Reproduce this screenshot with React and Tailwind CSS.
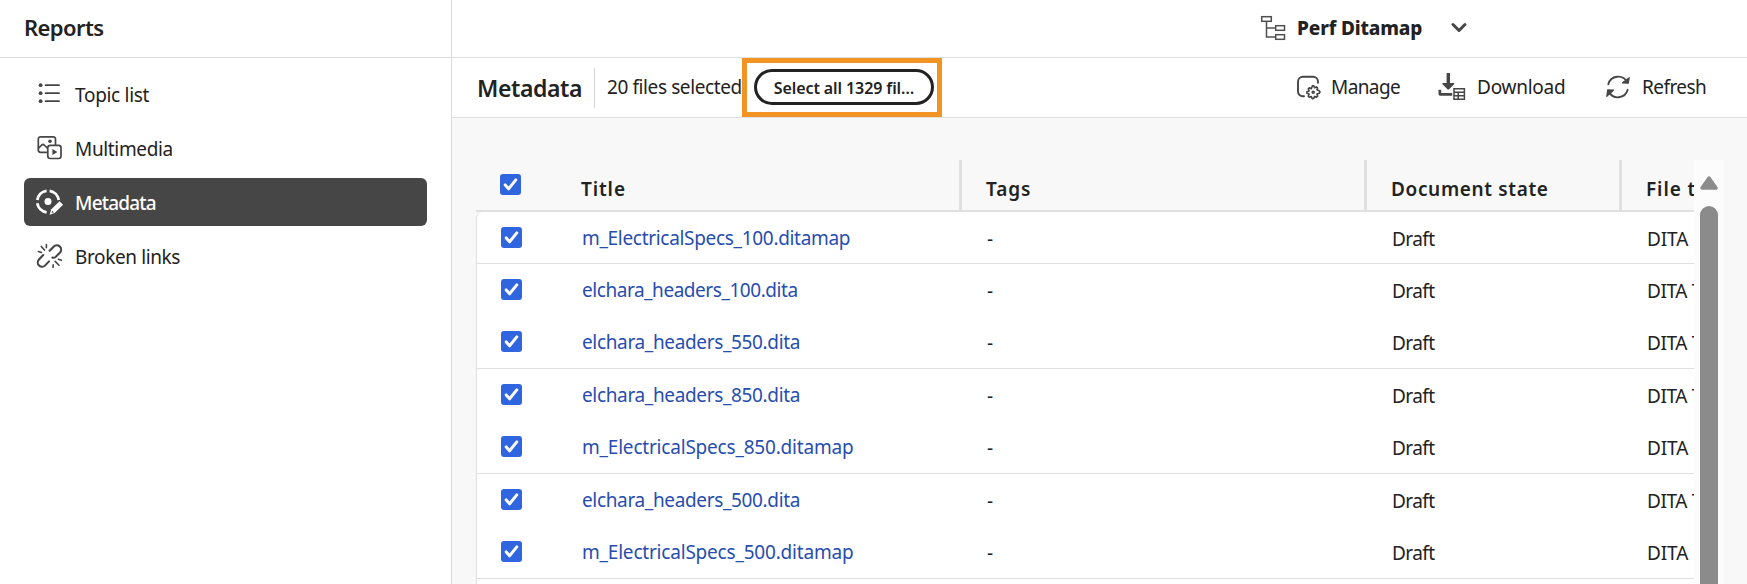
import React from "react";

const rows = [
  ["m_ElectricalSpecs_100.ditamap", "DITA Map"],
  ["elchara_headers_100.dita", "DITA Topic"],
  ["elchara_headers_550.dita", "DITA Topic"],
  ["elchara_headers_850.dita", "DITA Topic"],
  ["m_ElectricalSpecs_850.ditamap", "DITA Map"],
  ["elchara_headers_500.dita", "DITA Topic"],
  ["m_ElectricalSpecs_500.ditamap", "DITA Map"],
];

const ListIcon = () => (
  <svg width="28" height="28" viewBox="0 0 28 28" className="shrink-0" fill="none" stroke="#464646" strokeWidth="1.8" strokeLinecap="round">
    <path d="M10.6 5.2H24M10.6 13.2H24M10.6 21.2H24" />
    <g fill="#464646" stroke="none">
      <circle cx="5.6" cy="5.2" r="1.9" />
      <circle cx="5.6" cy="13.2" r="1.9" />
      <circle cx="5.6" cy="21.2" r="1.9" />
    </g>
  </svg>
);

const MediaIcon = () => (
  <svg width="28" height="28" viewBox="0 0 28 28" className="shrink-0" fill="none" stroke="#464646" strokeWidth="1.7" strokeLinecap="round" strokeLinejoin="round">
    <path d="M11.5 18.3H5.6a2.3 2.3 0 0 1-2.3-2.3V5.1a2.3 2.3 0 0 1 2.3-2.3h12.6a2.3 2.3 0 0 1 2.3 2.3v5.3" />
    <path d="M3.6 14.2 6.7 11q1.2-1.1 2.4 0l3 2.9" />
    <circle cx="15" cy="7.3" r="1.8" fill="#464646" stroke="none" />
    <rect x="12.8" y="11.3" width="13.2" height="13.2" rx="2.4" />
    <path d="M17.4 15v6l5-3z" fill="#464646" stroke="none" />
  </svg>
);

const MetadataIcon = () => (
  <svg width="28" height="28" viewBox="0 0 28 28" className="shrink-0 overflow-visible">
    <circle cx="13" cy="13.4" r="3.5" fill="#fff" />
    <g fill="none" stroke="#fff" strokeWidth="2.8">
      <path d="M2.3 12A10.9 10.9 0 0 1 11.6 2.8" />
      <path d="M14.6 2.8A10.9 10.9 0 0 1 23.8 12" />
      <path d="M2.3 15.2A10.9 10.9 0 0 0 11.6 24.3" />
    </g>
    <path d="m14.6 26.8 1.7-5.6 8.2-8 3.6 3.6-8.5 8.1z" fill="#fff" />
    <path d="m16.5 25 .7-2.3 1.7 1.6z" fill="#464646" />
  </svg>
);

const BrokenIcon = () => (
  <svg width="28" height="28" viewBox="0 0 28 28" className="shrink-0" fill="none" stroke="#464646" strokeWidth="2.1" strokeLinecap="round">
    <path d="m14.6 8.7 4-4a4.3 4.3 0 0 1 6.4 5.8l-4.4 4.5q-1.6 1.3-3.2.5" />
    <path d="M14 19.4l-3.8 4a4.3 4.3 0 0 1-6.2-6l4.2-4.4" />
    <g strokeWidth="1.6">
      <path d="M11.4 2.5v3.2M6.3 4.4l3.2 3.7M3.4 9.5l3 .9" />
      <path d="m23.4 17.3 3 .9M20.2 19.4l3.8 3.9M18.2 22.8l-.2 2.6" />
    </g>
  </svg>
);

const MapIcon = () => (
  <svg width="26" height="26" viewBox="0 0 26 26" className="shrink-0" fill="none" stroke="#505050" strokeWidth="1.5">
    <rect x="1.7" y="1.7" width="9.6" height="4.6" />
    <rect x="15.7" y="10.7" width="8.8" height="4.6" />
    <rect x="15.7" y="19.7" width="8.8" height="4.6" />
    <path d="M6.5 6.3v15.7h9.2M6.5 13h9.2" />
  </svg>
);

const ManageIcon = () => (
  <svg width="26" height="26" viewBox="0 0 26 26" className="shrink-0" fill="none" stroke="#464646" strokeWidth="1.9" strokeLinecap="round" strokeLinejoin="round">
    <path d="M8 22.2H6.7a4.7 4.7 0 0 1-4.7-4.7V7.7A4.9 4.9 0 0 1 6.9 2.8h10.2a4.9 4.9 0 0 1 4.9 4.9v1" />
    <g strokeWidth="1.6">
      <path d="m15.8 11.9 1.4-.1.8 2 1.8-.9 1.2 1-.7 1.9 2.3.9.8 1.3-.8 1.2-2.3.8.8 2-1.1 1.2-2-.8-.9 2.1-1.5.1-.9-2.1-2 .8-1-1.1.8-2.1-2.1-.9-.1-1.4 2.2-.9-.8-2 1-1.1 2 .9z" transform="translate(.6 0)" />
      <circle cx="17.2" cy="18.3" r="1" />
    </g>
  </svg>
);

const DownloadIcon = () => (
  <svg width="28" height="28" viewBox="0 0 28 28" className="shrink-0" fill="#464646">
    <path d="M8.6 0h3.4v10h4.1v1.2l-5.2 5.4h-1.2l-5.2-5.4V10h4.1z" />
    <path d="M.5 16.8h2.7v3.2h11v2.8H2.2Q.5 22.8.5 21z" />
    <path d="M16 15.8h10.4v10.4H16zM16 19.3h10.4M16 22.7h10.4M20.2 19.3v7" fill="none" stroke="#464646" strokeWidth="1.5" />
  </svg>
);

const RefreshIcon = () => (
  <svg width="26" height="26" viewBox="0 0 26 26" className="shrink-0" fill="none" stroke="#464646" strokeWidth="1.9" strokeLinecap="round">
    <path d="M3.3 10.2A10.2 10.2 0 0 1 22.2 8.2" />
    <path d="M22.7 15.8A10.2 10.2 0 0 1 3.8 17.8" />
    <path d="M24.2 3.7 23.3 9.2 17.5 8.8z" fill="#464646" strokeWidth="1.2" strokeLinejoin="round" />
    <path d="M1.8 22.3 2.7 15.8 8.5 16.2z" fill="#464646" strokeWidth="1.2" strokeLinejoin="round" />
  </svg>
);

function Check() {
  return (
    <span className="block size-[21px] shrink-0 rounded-[3px] bg-[#2f65de]">
      <svg width="21" height="21" viewBox="0 0 21 21" fill="none" stroke="#fafafa" strokeWidth="3" strokeLinecap="round" strokeLinejoin="round">
        <path d="m5.2 10.9 3.4 3.9 7.2-8.9" />
      </svg>
    </span>
  );
}

function NavItem({ icon, label, active, spacing }) {
  return (
    <li className={"flex h-12 items-center gap-3 rounded-md pl-[11px] " + (active ? "bg-[#464646] font-medium text-white" : "text-[#222]")}>
      {icon}
      <span className={"pt-0.5 " + spacing}>{label}</span>
    </li>
  );
}

export default function App() {
  return (
    <div className="flex h-[584px] w-[1747px] overflow-hidden bg-white font-['Noto_Sans','Liberation_Sans',sans-serif] text-[19px] leading-6 text-[#222]">
      <aside className="w-[452px] shrink-0 border-r border-[#dadada]">
        <header className="flex h-[58px] items-center border-b border-[#dadada] pb-[3px] pl-6">
          <h1 className="text-[22px] font-semibold tracking-[-0.6px]">Reports</h1>
        </header>
        <ul className="flex w-[427px] flex-col gap-1.5 pt-3 pl-6">
          <NavItem icon={<ListIcon />} label="Topic list" spacing="tracking-[-0.3px]" />
          <NavItem icon={<MediaIcon />} label="Multimedia" spacing="tracking-[-0.35px]" />
          <NavItem icon={<MetadataIcon />} label="Metadata" spacing="tracking-[-0.8px]" active />
          <NavItem icon={<BrokenIcon />} label="Broken links" spacing="tracking-[-0.38px]" />
        </ul>
      </aside>

      <main className="flex min-w-0 flex-1 flex-col">
        <div className="flex h-[58px] shrink-0 items-center border-b border-[#dfdfdf] pb-[2px] pl-[808px]">
          <MapIcon />
          <span className="ml-[11px] w-[153px] pt-px font-extrabold tracking-[-0.15px]">Perf Ditamap</span>
          <svg width="18" height="12" viewBox="0 0 18 12" fill="none" stroke="#464646" strokeWidth="3" strokeLinecap="round" strokeLinejoin="round">
            <path d="m3 2.5 6 6 6-6" />
          </svg>
        </div>

        <div className="flex h-[60px] shrink-0 items-center border-b border-[#dfdfdf]">
          <h2 className="ml-[25px] w-[117px] text-[23px] font-semibold tracking-[-0.4px]">Metadata</h2>
          <div className="h-10 w-px bg-[#d5d5d5]" />
          <span className="ml-3 w-[135px] pb-px tracking-[-0.4px] whitespace-nowrap">20 files selected</span>
          <div className="flex h-[59px] w-[200px] items-center border-[5px] border-[#f29423] pb-px pl-[7px]">
            <button className="h-9 w-[180px] rounded-full border-[3px] border-[#222] text-[16px] leading-[30px] font-semibold tracking-[-0.1px] whitespace-nowrap">
              <span className="block pt-px">Select all 1329 fil…</span>
            </button>
          </div>
          <div className="ml-auto flex items-center pr-[39px] pb-[2px]">
            <div className="flex items-center">
              <ManageIcon />
              <span className="ml-[9px] w-[107px] tracking-[-0.6px]">Manage</span>
            </div>
            <div className="flex items-center">
              <DownloadIcon />
              <span className="ml-[11px] w-[128px] tracking-[-0.24px]">Download</span>
            </div>
            <div className="flex items-center">
              <RefreshIcon />
              <span className="ml-[11px] w-[66px] tracking-[-0.55px]">Refresh</span>
            </div>
          </div>
        </div>

        <div className="flex min-h-0 flex-1 bg-[#f8f8f8] pt-[42px] pl-6">
          <div className="w-[1218px] shrink-0 overflow-hidden">
            <div className="flex h-[52px] w-[1400px] border-b-2 border-[#e0e0e0] font-semibold tracking-[0.9px]">
              <div className="flex w-[105px] items-center pb-px pl-6"><Check /></div>
              <div className="flex w-[381px] items-center border-r-[3px] border-[#e0e0e0] pt-2">Title</div>
              <div className="flex w-[405px] items-center border-r-[3px] border-[#e0e0e0] pt-2 pl-6">Tags</div>
              <div className="flex w-[255px] items-center border-r-[3px] border-[#e0e0e0] pt-2 pl-6 tracking-[0.65px]">Document state</div>
              <div className="flex flex-1 items-center pt-2 pl-6">File type</div>
            </div>
            <div className="w-[1400px] rounded-tl-md border-l border-[#e0e0e0] bg-white">
              {rows.map(([name, type], i) => (
                <div key={name} className={"flex pt-[15px] " + (i % 2 === 0 ? "border-b border-[#e0e0e0] " : "") + (i === 0 || i % 2 === 1 ? "h-[52px]" : "h-[53px]")}>
                  <div className="w-[105px] pl-6"><Check /></div>
                  <a className={"-mt-px w-[404px] text-[#274dae] " + (i === 0 ? "tracking-[-0.31px]" : i === 1 ? "tracking-[-0.45px]" : name[0] === "m" ? "tracking-[-0.2px]" : "tracking-[-0.35px]")}>{name}</a>
                  <div className="w-[405px] pl-px">-</div>
                  <div className="w-[254px] pl-px tracking-[-0.6px]">Draft</div>
                  <div className={"pl-0.5 " + (type === "DITA Map" ? "tracking-[-0.1px]" : "tracking-[-0.4px]")}>{type}</div>
                </div>
              ))}
              <div className="h-[53px]" />
            </div>
          </div>
          <div className="flex w-[30px] flex-col items-center bg-[#fcfcfc] pt-[15px]">
            <svg width="18" height="15" viewBox="0 0 18 15" className="shrink-0">
              <path d="M9 3 16 13H2z" fill="#8b8b8b" stroke="#8b8b8b" strokeWidth="3.4" strokeLinejoin="round" />
            </svg>
            <div className="mt-4 w-[18px] flex-1 rounded-t-full bg-[#8b8b8b]" />
          </div>
        </div>
      </main>
    </div>
  );
}
